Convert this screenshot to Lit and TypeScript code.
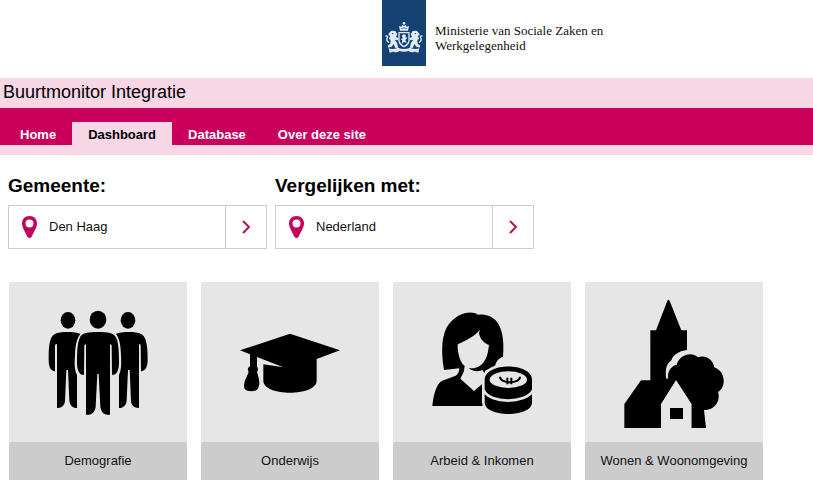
import { LitElement, html, css, svg } from "lit";
import { customElement, property } from "lit/decorators.js";

const people = svg`
  <ellipse cx="177" cy="115" rx="22" ry="25"/>
  <ellipse cx="357" cy="115" rx="22" ry="25"/>
  <ellipse cx="267" cy="113" rx="25" ry="27"/>
  <path d="M214 156C199 149 154 148 138 156C121 163 119 195 119 232C119 255 124 267 138 268L138 188L144 186L144 378C156 379 166 372 168 358L172 264L177 264L181 354C182 371 191 378 204 378L204 279C195 262 197 240 198 220C199 190 203 170 214 156Z"/>
  <path d="M321 156C336 149 381 148 396 156C413 163 416 195 416 232C416 255 410 267 396 268L395 188L390 186L390 378C378 379 368 372 366 358L362 264L357 264L353 354C352 371 343 378 330 378L330 279C338 262 337 240 336 220C335 190 332 170 321 156Z"/>
  <path d="M267 150C238 150 218 152 212 168C205 184 204 212 204 240C204 265 210 279 225 279L226 189L231 187L231 398C247 400 258 391 260 374L265 276L269 276L274 374C276 391 286 400 303 398L303 187L308 189L309 279C324 279 330 265 330 240C330 212 329 184 322 168C315 152 296 150 267 150Z"/>`;

const cap = svg`
  <path d="M117 205L267 155L417 205L347 231V296C347 344 187 344 187 296V247L247 256L168 225V254C172 259 172 265 168 269C171 284 181 302 170 321C162 330 140 330 131 321C124 302 139 284 143 269C139 264 139 258 147 253V217Z"/>`;

const income = svg`
  <g transform="translate(96 54)">
    <path d="M57 210C47 150 50 100 72 72C95 42 135 28 160 44C190 40 215 55 225 82C237 110 236 145 234 170C222 174 212 184 210 200L180 212V224L173 210C160 216 140 214 131 204C150 208 180 200 189 155L192 135C178 130 163 115 162 98L166 86C160 102 125 120 98 133C97 165 108 190 119 198L116 216L106 236L147 273L176 248L186 318H22C25 290 32 255 50 243L92 227Q102 222 103 205Z"/>
  </g>
  <path class="coin" d="M275 332V294C275 240 417 240 417 294V334V361C417 408 275 408 275 361Z"/>
  <ellipse cx="346" cy="293" rx="56" ry="25" class="paper"/>
  <path class="gap" d="M272 325C290 366 398 366 420 325"/>
  <path class="ink-line" d="M321 284C321 306 381 306 381 284M343 287V307M355 287V307"/>`;

const town = svg`
  <path d="M250 53Q253 53 255 59L289 145H306V204C280 207 263 220 259 235C243 245 240 267 244 291L251 288L273 295L229 365V438H118V366L168 295H196V145H213L246 59Q248 53 250 53Z"/>
  <path d="M250 290C246 271 256 253 275 248C282 220 318 206 339 226C360 218 384 231 388 256C423 269 424 317 399 330C408 356 388 386 357 384L363 438H319V365L273 295L260 315L246 300Z"/>
  <path class="paper" d="M273 295L319 367V438H228V367Z"/>
  <path d="M255 378H294V411H255Z"/>`;

const topics = [
  { label: "Demografie", icon: people },
  { label: "Onderwijs", icon: cap },
  { label: "Arbeid & Inkomen", icon: income },
  { label: "Wonen & Woonomgeving", icon: town },
];

@customElement("ministry-logo")
class MinistryLogo extends LitElement {
  static styles = css`
    :host { display: grid; grid-template-columns: 1fr 44px 1fr; padding: 0 5px 12px 0; }
    .ribbon { grid-column: 2; display: block; width: 44px; height: 66px; background: #154273; }
    .mark { fill: #dfeaf5; }
    .line { fill: none; stroke: #dfeaf5; stroke-width: 4; stroke-linecap: round; stroke-linejoin: round; }
    .blue { fill: #154273; }
    .name { margin: 23px 0 0 9px; font: 13px/15px "Liberation Serif", serif; color: #111; }
  `;
  render() {
    return html`
      <svg class="ribbon" viewBox="0 0 132 198" aria-hidden="true">
        <path class="mark" d="M54 92L51 78L58 80L61 75L66 78L71 75L74 80L81 78L78 92Z"/>
        <circle class="mark" cx="66" cy="70" r="4"/>
        <circle class="blue" cx="60" cy="85" r="2"/><circle class="blue" cx="66" cy="84" r="2"/><circle class="blue" cx="72" cy="85" r="2"/>
        <path class="line" d="M51 98H81V121Q80 133 66 140Q52 133 51 121Z"/>
        <path class="mark" d="M59 107L65 103L72 106L70 112L76 113L70 120L74 129L66 126L59 131L61 121L56 117L63 115Z"/>
        <path class="mark" d="M21 99L28 92L40 93L46 103L42 111L50 115L47 121L38 119L45 128L49 143L40 144L35 132L29 140L20 143L17 137L25 131L26 120L20 116L25 108L19 106Z"/>
        <path class="mark" d="M111 99L104 92L92 93L86 103L90 111L82 115L85 121L94 119L87 128L83 143L92 144L97 132L103 140L112 143L115 137L107 131L106 120L112 116L107 108L113 106Z"/>
        <path class="line" d="M20 127Q11 121 16 114Q19 108 12 108M112 127Q121 121 116 114Q113 108 120 108"/>
        <path class="mark" d="M20 145Q34 150 48 143Q66 151 84 143Q98 150 112 145L109 158L98 155Q86 159 80 153Q66 157 52 153Q46 159 34 155L23 158Z"/>
        <circle class="blue" cx="32" cy="101" r="2"/><circle class="blue" cx="100" cy="101" r="2"/>
      </svg>
      <div class="name">Ministerie van Sociale Zaken en<br>Werkgelegenheid</div>`;
  }
}

@customElement("region-picker")
class RegionPicker extends LitElement {
  @property() label = "";
  @property() value = "";
  static styles = css`
    :host { display: block; }
    .label { display: block; font-size: 19px; font-weight: bold; line-height: 24px; margin-bottom: 7px; }
    .field {
      display: flex; box-sizing: border-box; width: 100%; height: 44px; padding: 0;
      border: 1px solid #ccc; border-radius: 0; background: #fff; color: #111;
      font: 13px/16px "Liberation Sans", Arial, sans-serif; text-align: left; cursor: pointer;
    }
    .value { flex: 1; display: flex; align-items: center; gap: 12px; padding-left: 13px; }
    .pin { width: 15px; height: 22px; fill: #c4005a; }
    .go { width: 40px; border-left: 1px solid #ccc; display: flex; align-items: center; justify-content: center; }
    .arrow { width: 9px; height: 14px; fill: none; stroke: #b0145c; stroke-width: 2; }
    .value, .go { align-self: stretch; }
  `;
  render() {
    return html`
      <label class="label" for="region">${this.label}</label>
      <button class="field" id="region" type="button">
        <span class="value">
          <svg class="pin" viewBox="0 0 30 44" aria-hidden="true"><path fill-rule="evenodd" d="M15 0C6 0 0 6 0 15C0 23 7 33 11 42Q15 46 19 42C23 33 30 23 30 15C30 6 24 0 15 0ZM15 7A8 8 0 1 1 15 23A8 8 0 1 1 15 7Z"/></svg>
          ${this.value}
        </span>
        <span class="go"><svg class="arrow" viewBox="0 0 9 14" aria-hidden="true"><path d="M1 1L7 7L1 13"/></svg></span>
      </button>`;
  }
}

@customElement("app-root")
class AppRoot extends LitElement {
  static styles = css`
    :host { display: block; background: #fff; color: #000; font-family: "Liberation Sans", Arial, sans-serif; }
    .title { margin: 0; padding: 0 3px 2px; background: #f7d6e6; font-size: 18px; font-weight: normal; line-height: 28px; }
    .nav { display: flex; padding: 14px 0 0 4px; background: #ca005d; border-bottom: 10px solid #f7d6e6; }
    .tab { padding: 2px 16px 0; color: #fff; font-size: 13px; font-weight: bold; line-height: 21px; text-decoration: none; }
    .tab.current { background: #f7d6e6; color: #000; }
    .pickers { display: grid; grid-template-columns: repeat(auto-fit, 259px); gap: 8px; padding: 19px 8px 0; }
    .topics { display: grid; grid-template-columns: repeat(auto-fill, 178px); gap: 14px; padding: 33px 9px 11px; }
    .topic { display: block; background: #e6e6e6; color: #111; text-decoration: none; }
    .icon { display: block; width: 100%; aspect-ratio: 178 / 160; fill: #000; }
    .icon .paper { fill: #e6e6e6; }
    .icon .coin { stroke: #e6e6e6; stroke-width: 16; paint-order: stroke; }
    .icon .gap { fill: none; stroke: #e6e6e6; stroke-width: 8; }
    .icon .ink-line { fill: none; stroke: #000; stroke-width: 6; }
    .caption { display: block; background: #ccc; font-size: 13px; line-height: 38px; text-align: center; }
  `;
  render() {
    return html`
      <header>
        <ministry-logo></ministry-logo>
        <h1 class="title">Buurtmonitor Integratie</h1>
        <nav class="nav">
          <a class="tab" href="#home">Home</a>
          <a class="tab current" href="#dashboard" aria-current="page">Dashboard</a>
          <a class="tab" href="#database">Database</a>
          <a class="tab" href="#over">Over deze site</a>
        </nav>
      </header>
      <main>
        <div class="pickers">
          <region-picker label="Gemeente:" value="Den Haag"></region-picker>
          <region-picker label="Vergelijken met:" value="Nederland"></region-picker>
        </div>
        <div class="topics">
          ${topics.map((t) => html`
            <a class="topic" href="#topic">
              <svg class="icon" viewBox="0 0 534 480" aria-hidden="true">${t.icon}</svg>
              <span class="caption">${t.label}</span>
            </a>`)}
        </div>
      </main>`;
  }
}
